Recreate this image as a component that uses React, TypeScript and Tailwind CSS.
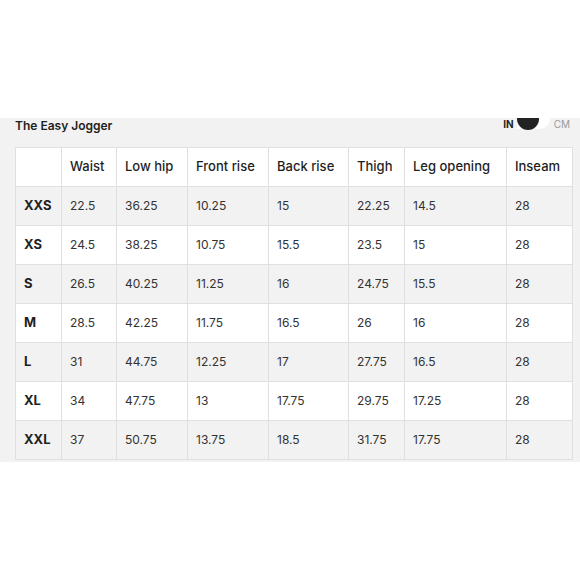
import React from "react";

const cols = ["", "Waist", "Low hip", "Front rise", "Back rise", "Thigh", "Leg opening", "Inseam"];
const widths = [46, 55, 71, 81, 80, 56, 102, 66];
const rows: string[][] = [
  ["XXS", "22.5", "36.25", "10.25", "15", "22.25", "14.5", "28"],
  ["XS", "24.5", "38.25", "10.75", "15.5", "23.5", "15", "28"],
  ["S", "26.5", "40.25", "11.25", "16", "24.75", "15.5", "28"],
  ["M", "28.5", "42.25", "11.75", "16.5", "26", "16", "28"],
  ["L", "31", "44.75", "12.25", "17", "27.75", "16.5", "28"],
  ["XL", "34", "47.75", "13", "17.75", "29.75", "17.25", "28"],
  ["XXL", "37", "50.75", "13.75", "18.5", "31.75", "17.75", "28"],
];

export default function App() {
  return (
    <div className="w-[580px] h-[580px] bg-white pt-[118px] text-[#1f1f1f]" style={{ fontFamily: "Inter, 'Liberation Sans', sans-serif" }}>
      <div className="h-[344px] bg-[#f2f2f2] overflow-hidden pl-[15px] pr-[8px]">
        <div className="flex items-start justify-between h-[29px]">
          <div className="text-[12px] font-semibold leading-[14px] mt-[1px]">The Easy Jogger</div>
          <div className="flex items-start mt-[-10px] mr-[2px]">
            <span className="text-[10px] font-bold leading-[10px] mr-[3px] mt-[11px]">IN</span>
            <div className="relative w-[33px] h-[21px] bg-white rounded-r-full">
              <div className="absolute left-0 top-0 w-[22px] h-[22px] rounded-full bg-[#222]" />
            </div>
            <span className="text-[10px] text-[#9a9a9a] leading-[10px] ml-[4px] mt-[11px]">CM</span>
          </div>
        </div>
        <table className="border-collapse table-fixed w-[557px]">
          <colgroup>
            {widths.map((w, i) => (
              <col key={i} style={{ width: w }} />
            ))}
          </colgroup>
          <thead>
            <tr className="bg-white h-[39px]">
              {cols.map((c, i) => (
                <th key={i} className="border border-[#e0e0e0] text-left font-medium text-[13px] pl-[8px] p-0 whitespace-nowrap">
                  {c}
                </th>
              ))}
            </tr>
          </thead>
          <tbody>
            {rows.map((r, ri) => (
              <tr key={ri} className={`h-[39px] ${ri % 2 === 0 ? "bg-[#f2f2f2]" : "bg-white"}`}>
                {r.map((v, ci) => (
                  <td
                    key={ci}
                    className={`border border-[#e0e0e0] p-0 pl-[8px] whitespace-nowrap ${ci === 0 ? "font-bold text-[13px]" : "text-[12px] text-[#333]"}`}
                  >
                    {v}
                  </td>
                ))}
              </tr>
            ))}
          </tbody>
        </table>
      </div>
    </div>
  );
}
